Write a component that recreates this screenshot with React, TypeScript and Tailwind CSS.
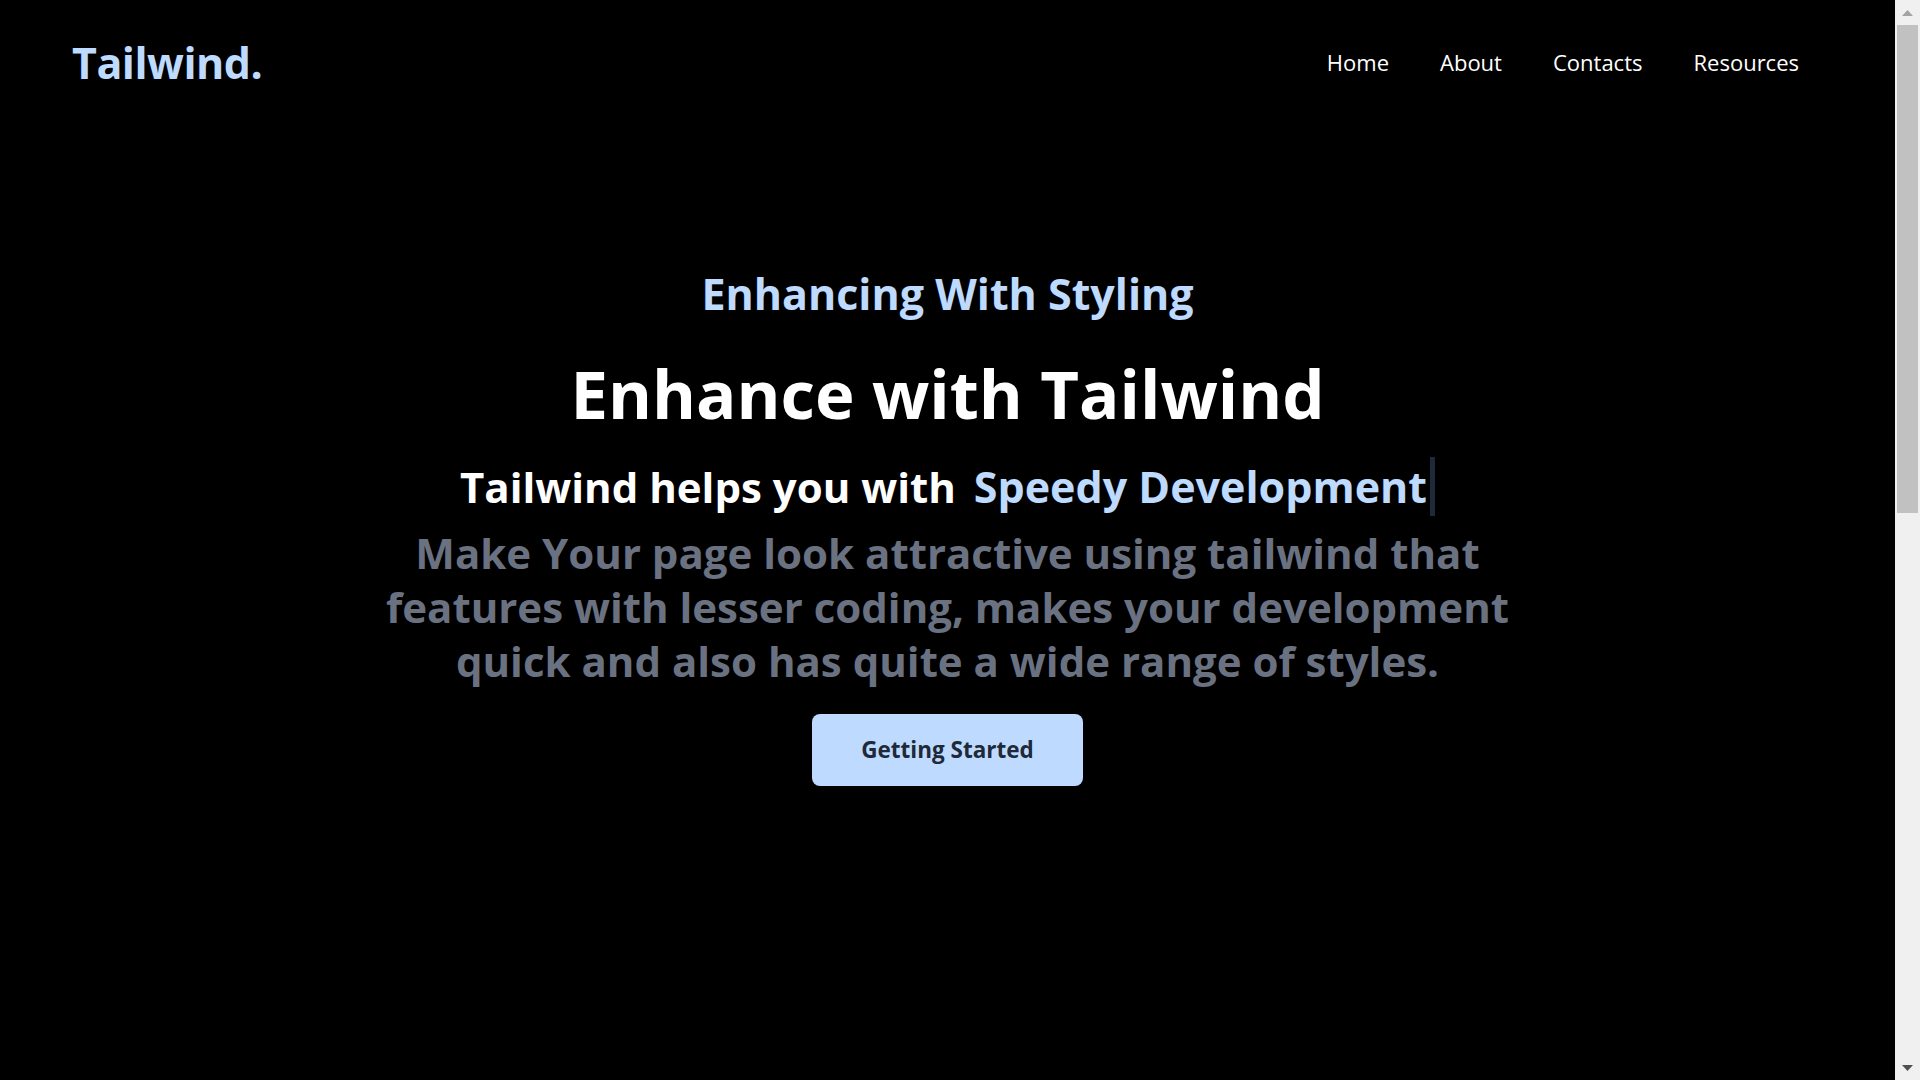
import { useEffect, useState } from "react";

const links = ["Home", "About", "Contacts", "Resources"];

function Typed({ text }: { text: string }) {
  const [shown, setShown] = useState(text);

  useEffect(() => {
    setShown(text);
  }, [text]);

  return (
    <span className="ml-[18px] text-[43px] text-blue-200 border-r-[5px] border-gray-800 pr-[3px]">{shown}</span>
  );
}

// window scrollbar, as it shows in the screenshot
function Scrollbar() {
  return (
    <aside className="w-[25px] h-screen shrink-0 flex flex-col bg-[#f0f0f0]">
      <div className="h-[25px] flex items-center justify-center">
        <svg width="11" height="6" viewBox="0 0 11 6">
          <polygon points="5.5,0 11,6 0,6" fill="#a3a3a3" />
        </svg>
      </div>
      <div className="flex-1 flex flex-col">
        <div className="h-[488px] mx-[2px] bg-[#c1c1c1]" />
      </div>
      <div className="h-[25px] flex items-center justify-center">
        <svg width="11" height="6" viewBox="0 0 11 6">
          <polygon points="0,0 11,0 5.5,6" fill="#505050" />
        </svg>
      </div>
    </aside>
  );
}

export default function App() {
  return (
    <div className="flex bg-black text-white font-['Open_Sans','Noto_Sans',sans-serif]">
      <div className="flex-1 min-w-0 min-h-[2306px]">
        {/* Navbar */}
        <header className="h-[124px] flex items-center justify-between pl-[72px] pr-[96px]">
          <a href="#" className="text-[43px] leading-none font-bold text-blue-200 tracking-[-0.5px]">
            Tailwind.
          </a>
          <nav className="flex items-center gap-[51px]">
            {links.map((l) => (
              <a key={l} href="#" className="text-[22px] text-white">
                {l}
              </a>
            ))}
          </nav>
        </header>

        {/* Hero */}
        <section className="flex flex-col items-center text-center pt-[146px]">
          <p className="text-[43px] leading-[48px] font-bold text-blue-200">Enhancing With Styling</p>
          <h1 className="mt-[42px] text-[67px] leading-none font-bold">Enhance with Tailwind</h1>
          <h2 className="mt-[36px] text-[42px] leading-[48px] font-bold">
            Tailwind helps you with
            <Typed text="Speedy Development" />
          </h2>
          <p className="mt-[15px] text-[42px] leading-[54px] font-bold text-gray-500">
            Make Your page look attractive using tailwind that
            <br />
            features with lesser coding, makes your development
            <br />
            quick and also has quite a wide range of styles.
          </p>
          <button className="mt-[26px] h-[72px] px-[49px] rounded-lg bg-blue-200 text-gray-800 text-[22.5px] font-bold">
            Getting Started
          </button>
        </section>
      </div>
      <Scrollbar />
    </div>
  );
}
